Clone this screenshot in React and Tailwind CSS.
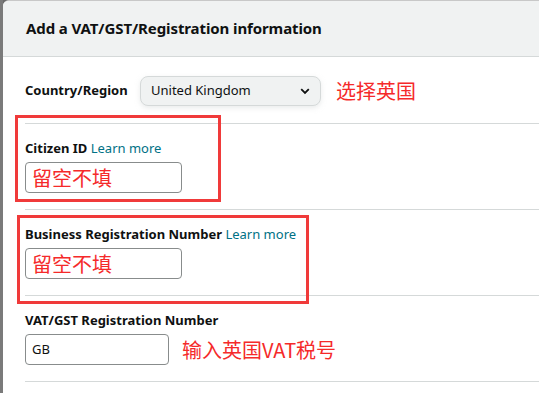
import React from 'react';

const SANS = { fontFamily: '"Noto Sans", "Open Sans", "Noto Sans CJK SC", sans-serif' };
const CJK = { fontFamily: '"Noto Sans CJK SC", "Noto Sans", sans-serif' };

const Label = ({ children, link }) => (
    <div className="text-[13px] leading-[18px] font-bold text-[#0f1111] mb-[5px]">
        {children}
        {link && <span className="font-normal text-[#007185]"> Learn more</span>}
    </div>
);

const Field = ({ label, link, width, value, note, boxed }) => (
    <div className="border-t border-[#d5d9d9] pt-[15px] pb-[16px]">
        <Label link={link}>{label}</Label>
        <div className="flex items-center gap-[13px]">
            <div className={`${width} h-[31px] border border-[#888c8c] rounded-[4px] bg-white flex items-center px-[6px]`}>
                {boxed ? (
                    <span className="text-[20px] text-[#f52a2a] leading-none" style={CJK}>{value}</span>
                ) : (
                    <span className="text-[13px] text-[#0f1111]">{value}</span>
                )}
            </div>
            {note && <span className="text-[20px] text-[#f52a2a] leading-none" style={CJK}>{note}</span>}
        </div>
    </div>
);

export default function App() {
    return (
        <div className="w-[539px] h-[393px] overflow-hidden flex bg-[#6b6b6b]" style={SANS}>
            <div className="w-[3px] bg-[#7a7a7a]" />
            <div className="flex-1 bg-white rounded-tl-[6px] border-t border-[#c8c8c8] overflow-hidden">
                <div className="h-[56px] bg-[#f0f2f2] border-b border-[#d5d9d9] flex items-center pl-[23px]">
                    <h3 className="text-[15px] font-bold text-[#0f1111] tracking-[-0.1px]">Add a VAT/GST/Registration information</h3>
                </div>

                <div className="relative pl-[22px]">
                    <div className="flex items-center pt-[19px] pb-[17px]">
                        <span className="text-[13px] font-bold text-[#0f1111] w-[115px]">Country/Region</span>
                        <div className="w-[181px] h-[30px] rounded-[8px] bg-[#f0f2f2] border border-[#d5d9d9] shadow-[0_2px_5px_rgba(213,217,217,0.5)] flex items-center justify-between pl-[10px] pr-[10px]">
                            <span className="text-[13px] text-[#0f1111]">United Kingdom</span>
                            <svg width="10" height="7" viewBox="0 0 10 7">
                                <path d="M1.2 1.2 L5 5 L8.8 1.2" fill="none" stroke="#0f1111" strokeWidth="1.8" />
                            </svg>
                        </div>
                        <span className="ml-[15px] text-[20px] text-[#f52a2a] leading-none" style={CJK}>选择英国</span>
                    </div>

                    <Field label="Citizen ID" link width="w-[157px]" value="留空不填" boxed />
                    <Field label="Business Registration Number" link width="w-[157px]" value="留空不填" boxed />
                    <Field label="VAT/GST Registration Number" width="w-[144px]" value="GB" note="输入英国VAT税号" />
                    <div className="border-t border-[#d5d9d9]" />

                    {/* red annotation frames */}
                    <div className="absolute left-[12px] top-[58px] w-[206px] h-[87px] border-[3px] border-[#f03a3a]" />
                    <div className="absolute left-[14px] top-[158px] w-[292px] h-[89px] border-[3px] border-[#f03a3a]" />
                </div>
            </div>
        </div>
    );
}
